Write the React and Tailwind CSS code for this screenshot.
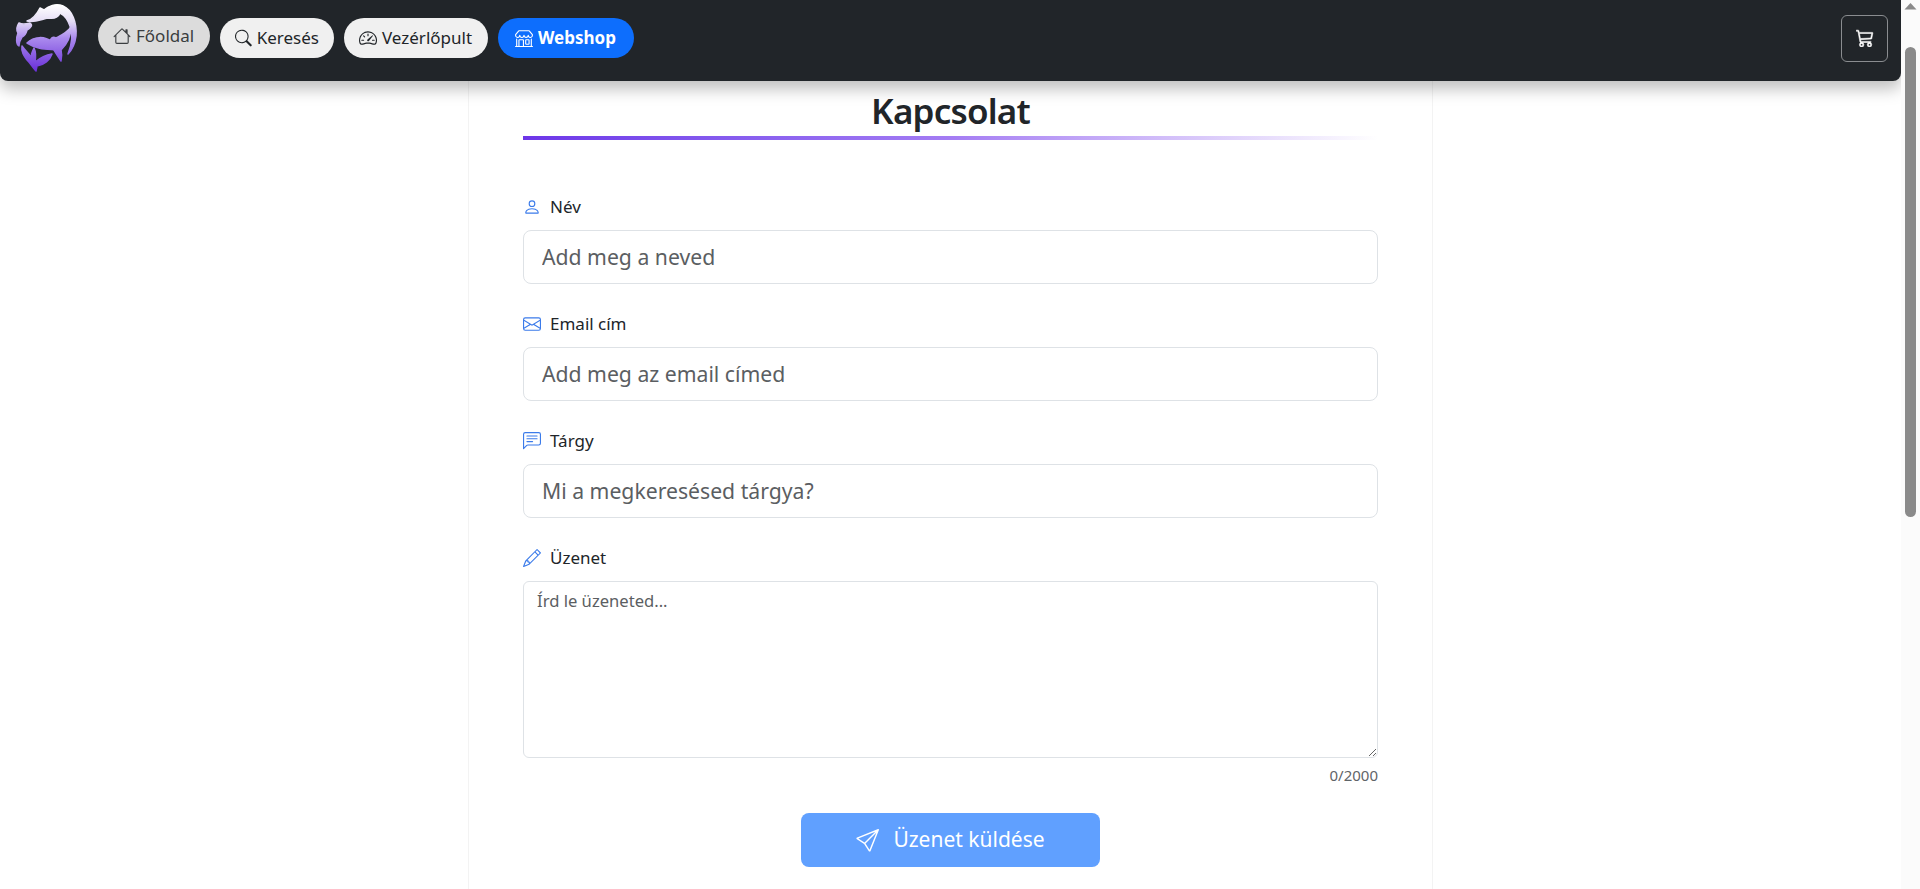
import React from "react";
import { BsHouse, BsSearch, BsSpeedometer2, BsShop, BsCart3, BsPerson, BsEnvelope, BsChatLeftText, BsPencil, BsSend } from "react-icons/bs";

function Logo() {
  return (
    <svg viewBox="0 0 90 80" className="w-[90px] h-[80px] shrink-0 self-start">
      <defs>
        <linearGradient id="lg" gradientUnits="userSpaceOnUse" x1="0" y1="5" x2="0" y2="71">
          <stop offset="0" stopColor="#ffffff" />
          <stop offset="0.25" stopColor="#e4dcf5" />
          <stop offset="0.5" stopColor="#ab8bee" />
          <stop offset="1" stopColor="#6a30d8" />
        </linearGradient>
      </defs>
      <g fill="url(#lg)" stroke="url(#lg)" strokeWidth="1.5" strokeLinejoin="round">
        <path d="M27 21 C34 19 38 12 40 8 L44 10 C48 6 56 3 63 6 C72 10 77 22 76 36 C75 44 72 50 68 54 C72 44 73 34 70 26 C68 20 64 15 60 13 C58 18 54 19 48 18 C42 19 34 23 27 21 Z" />
        <path d="M71 27 C71 36 67 44 61 50 C62 54 62 57 61 61 C58 56 53 50 50 42 C50 38 53 36 56 38 C60 36 67 33 71 27 Z" />
        <path d="M19 23 C23 25 26 24 30 23 C33 25 31 28 27 30 C26 34 24 36 22 37 C20 40 19 43 19 46 C16 44 16 38 18 33 C16 30 17 26 19 23 Z" />
        <path d="M27 43 C34 36 45 36 52 42 C54 44 56 48 57 50 C48 49 38 50 27 43 Z" />
        <path d="M22 46 C26 52 30 54 33 60 C30 56 32 52 34 48 C36 52 36 56 35 62 C40 58 46 55 52 54 C50 60 44 65 37 66 L36 71 C33 68 31 64 27 60 C24 56 21 52 22 46 Z" />
      </g>
    </svg>
  );
}

function NavBtn({ icon, label, className }) {
  return (
    <button className={`flex items-center gap-[5px] h-10 rounded-[20px] px-[15px] text-[17px] ${className}`}>
      {icon}
      {label}
    </button>
  );
}

function FieldLabel({ icon, label }) {
  return (
    <label className="flex items-center h-[24px] mb-[11px] text-[17px] text-[#212529]">
      <span className="w-[27px] text-[#3b7bea] flex items-center">{icon}</span>
      {label}
    </label>
  );
}

function Field({ icon, label, placeholder }) {
  return (
    <div className="mb-[28px]">
      <FieldLabel icon={icon} label={label} />
      <input
        placeholder={placeholder}
        className="block w-full h-[54px] rounded-[8px] border border-[#dee2e6] pl-[18px] pr-[18px] pb-[2px] text-[21.2px] text-[#212529] placeholder:text-[#5b5e62] outline-none"
      />
    </div>
  );
}

export default function App() {
  return (
    <div className="flex h-screen overflow-hidden bg-white font-['Noto_Sans','Open_Sans',sans-serif]">
      <div className="relative flex-1 min-w-0 overflow-hidden">
        <header className="absolute left-0 right-0 top-0 z-10 h-[81px] flex items-center justify-between pr-[13px] pb-[5px] bg-[#212529] rounded-b-[8px] shadow-[0_8px_16px_rgba(0,0,0,0.25)]">
          <div className="flex items-center h-full">
            <div className="mr-[8px] h-full"><Logo /></div>
            <div className="flex items-center gap-[10px]">
              <NavBtn className="w-[112px] -translate-y-[2px] bg-[#dcdcdc] text-[#3a3d40]" icon={<BsHouse className="w-[18px] h-[18px]" />} label="Főoldal" />
              <NavBtn className="w-[114px] bg-[#f0f0f0] text-[#212529]" icon={<BsSearch className="w-[18px] h-[18px]" />} label="Keresés" />
              <NavBtn className="w-[144px] bg-[#f0f0f0] text-[#212529]" icon={<BsSpeedometer2 className="w-[18px] h-[18px]" />} label="Vezérlőpult" />
              <button className="flex items-center gap-[5px] h-10 w-[136px] rounded-[20px] px-[17px] text-[17px] font-bold text-white bg-[#0d6efd]">
                <BsShop className="w-[18px] h-[18px]" /> Webshop
              </button>
            </div>
          </div>
          <button className="w-[47px] h-[47px] rounded-[6px] border border-[#8a8d90] flex items-center justify-center text-white">
            <BsCart3 className="w-[18px] h-[18px] stroke-[0.5] stroke-white" />
          </button>
        </header>

        <main className="flex justify-center">
          <div className="w-[965px] h-[889px] border-x border-[#f3f3f3] px-[54px] pt-[89px]">
            <h1 className="text-center text-[35px] leading-[44px] font-semibold tracking-[-0.8px] text-[#212529]">Kapcsolat</h1>
            <div className="mt-[3px] h-[4px] bg-gradient-to-r from-[#6d35e8] via-[#a47cf3] to-transparent" />
            <div className="mt-[55px]">
              <Field icon={<BsPerson className="w-[18px] h-[18px]" />} label="Név" placeholder="Add meg a neved" />
              <Field icon={<BsEnvelope className="w-[18px] h-[18px]" />} label="Email cím" placeholder="Add meg az email címed" />
              <Field icon={<BsChatLeftText className="w-[18px] h-[18px]" />} label="Tárgy" placeholder="Mi a megkeresésed tárgya?" />
              <div>
                <FieldLabel icon={<BsPencil className="w-[18px] h-[18px]" />} label="Üzenet" />
                <textarea
                  placeholder="Írd le üzeneted..."
                  className="block w-full h-[177px] rounded-[6px] border border-[#dee2e6] px-[13px] py-[7px] text-[16.6px] leading-[24px] text-[#212529] placeholder:text-[#5b5e62] outline-none"
                />
                <div className="mt-[6px] text-right text-[15px] leading-[22px] text-[#5f6468]">0/2000</div>
              </div>
              <div className="mt-[27px] flex justify-center">
                <button className="w-[299px] h-[54px] rounded-[8px] bg-[#60a0ff] text-white text-[21px] flex items-center justify-center gap-[14px]">
                  <BsSend className="w-[23px] h-[23px]" /> Üzenet küldése
                </button>
              </div>
            </div>
          </div>
        </main>
      </div>
      <div className="w-[19px] shrink-0 bg-[#fbfbfb] flex flex-col items-center">
        <svg viewBox="0 0 17 17" className="w-[17px] h-[17px] text-[#8a8a8a]"><path fill="currentColor" d="M2.5 9.5 L8.5 3 L14.5 9.5 Z" /></svg>
        <div className="mt-[30px] w-[11px] h-[470px] rounded-[6px] bg-[#8a8a8a]" />
      </div>
    </div>
  );
}
